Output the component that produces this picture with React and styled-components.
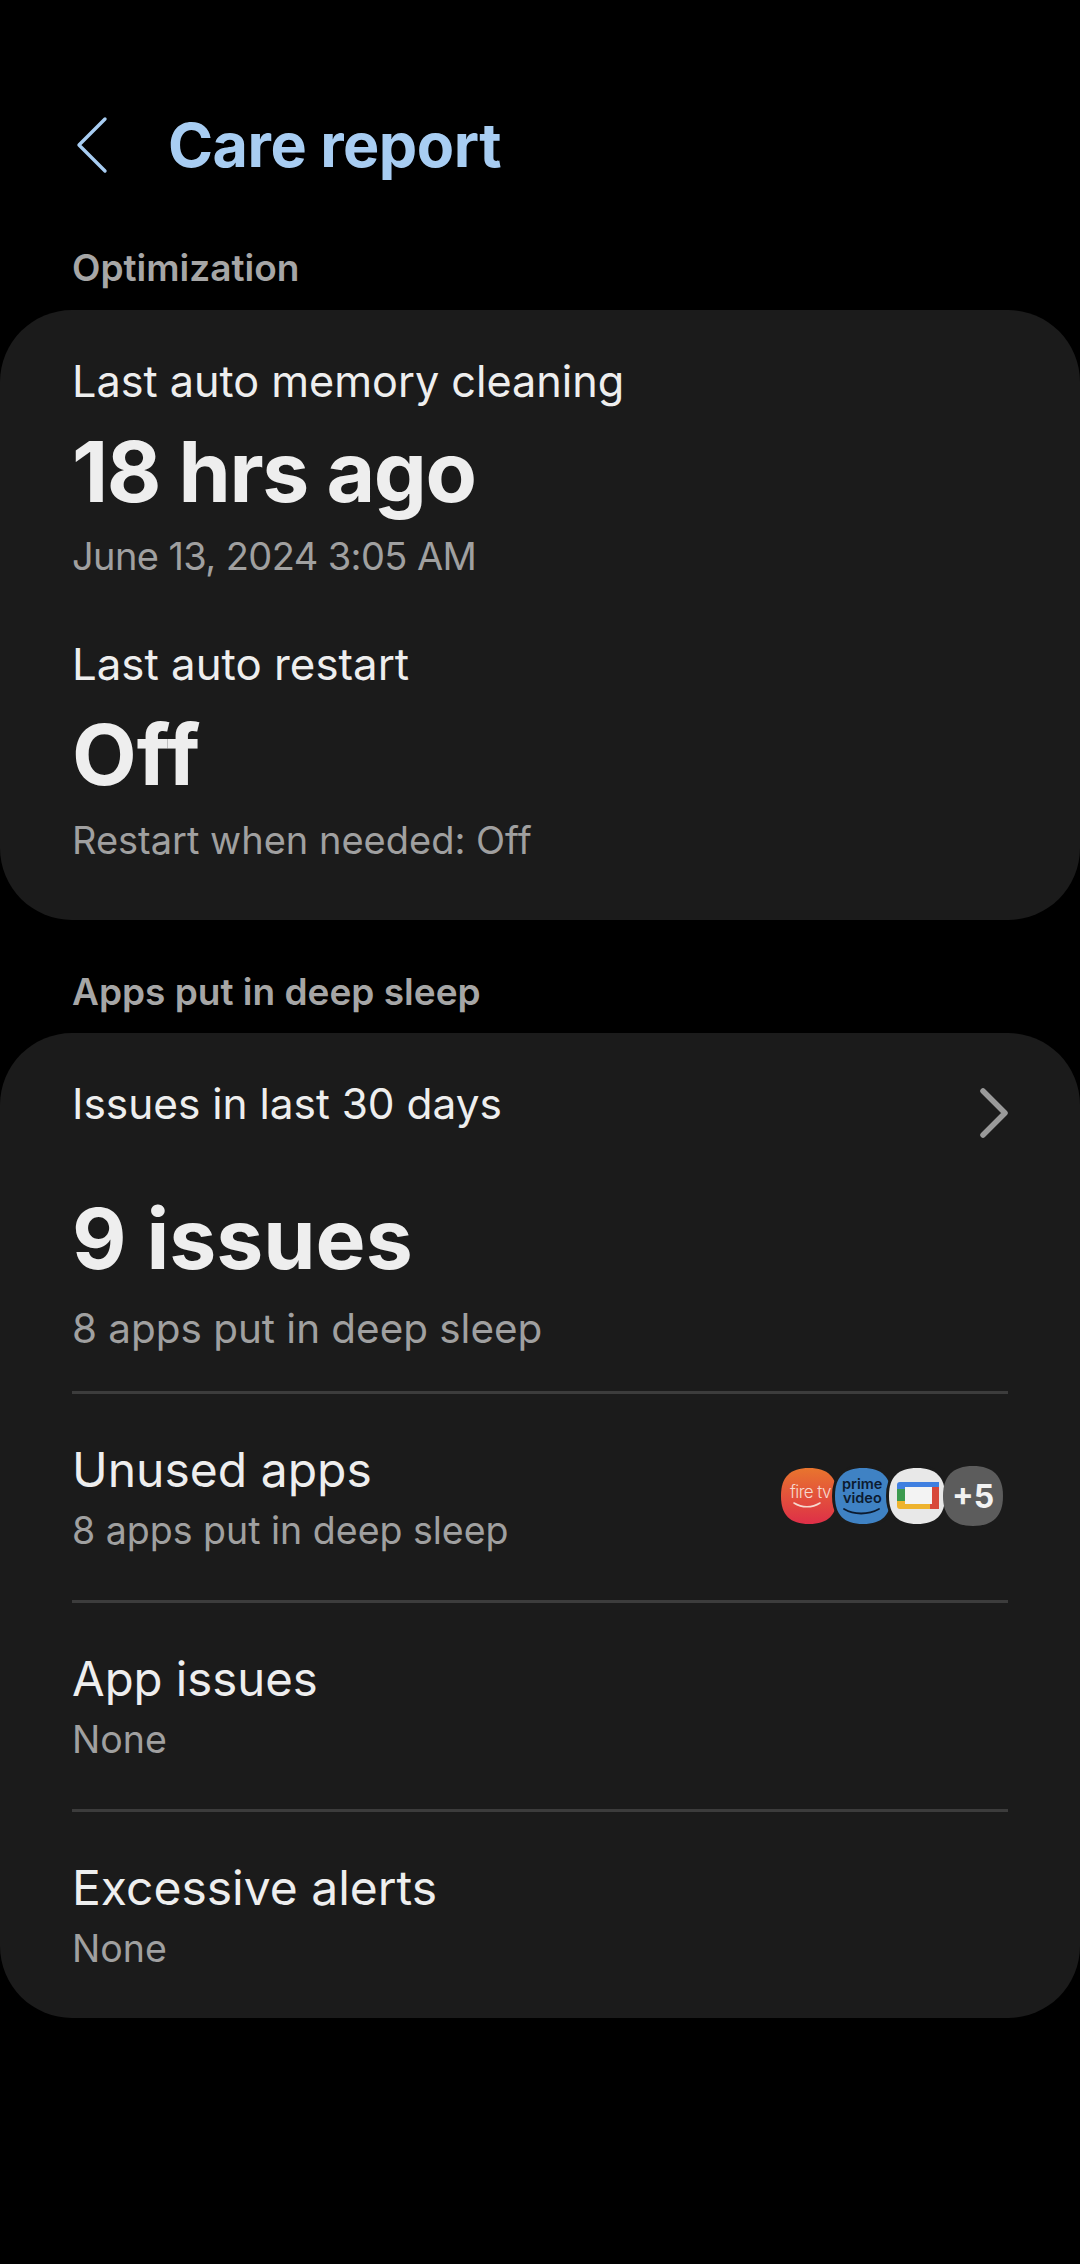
import React from 'react';
import styled, { createGlobalStyle } from 'styled-components';

const GlobalStyle = createGlobalStyle`
  html, body {
    margin: 0;
    padding: 0;
    background: #000;
    font-family: Inter, "Noto Sans", sans-serif;
  }
`;

const Page = styled.div`
  width: 1080px;
  height: 2264px;
  padding-top: 95px;
  box-sizing: border-box;
  background: #000;
  overflow: hidden;
`;

const Header = styled.div`
  display: flex;
  align-items: center;
  height: 100px;
  padding-left: 76px;
  gap: 60px;
`;

const Title = styled.h1`
  margin: 0;
  font-size: 61px;
  font-weight: 700;
  letter-spacing: -0.5px;
  color: #a8cdf2;
`;

const SectionLabel = styled.div`
  margin: ${(p) => p.$top}px 0 ${(p) => p.$bottom}px 72px;
  height: 46px;
  line-height: 46px;
  font-size: 37px;
  font-weight: 600;
  color: #a6a6a6;
`;

const Card = styled.div`
  background: #1b1b1b;
  border-radius: 72px;
  padding: ${(p) => p.$pad};
`;

const StatBlock = styled.div`
  padding-top: ${(p) => p.$top || 0}px;
`;

const StatHead = styled.div`
  display: flex;
  align-items: center;
  justify-content: space-between;
`;

const StatLabel = styled.div`
  height: 50px;
  line-height: 50px;
  font-size: ${(p) => p.$size || 43.2}px;
  color: #eeeeee;
`;

const BigValue = styled.div`
  margin-top: ${(p) => p.$top}px;
  height: 110px;
  line-height: 110px;
  font-size: 84px;
  font-weight: 700;
  letter-spacing: ${(p) => p.$spacing || 0}px;
  color: #eeeeee;
`;

const SubText = styled.div`
  margin-top: ${(p) => p.$top || 0}px;
  height: 46px;
  line-height: 46px;
  font-size: ${(p) => p.$size || 38}px;
  letter-spacing: ${(p) => p.$spacing || 0}px;
  color: #a0a0a0;
`;

const Divider = styled.div`
  height: 3px;
  background: #3c3c3c;
`;

const DividerGap = styled.div`
  height: 39px;
`;

const Row = styled.div`
  display: flex;
  align-items: center;
  justify-content: space-between;
  height: 206px;
  box-sizing: border-box;
`;

const RowTitle = styled.div`
  height: 60px;
  line-height: 60px;
  font-size: ${(p) => p.$size || 48}px;
  color: #eeeeee;
`;

const RowSub = styled(SubText)`
  margin-top: 8px;
`;

const IconStack = styled.div`
  display: flex;
  align-items: center;
  margin-right: 4px;
  margin-top: -2px;
`;

const AppIcon = styled.svg`
  display: block;
  width: 62px;
  height: 62px;
  flex: none;
  margin-left: ${(p) => p.$left || 0}px;
  position: relative;
`;

const CountBadge = styled.div`
  position: relative;
  width: 62px;
  height: 62px;
  margin-left: -6px;
  display: flex;
  align-items: center;
  justify-content: center;
  font-size: 32px;
  font-weight: 700;
  color: #f2f2f2;
`;

const CountShape = styled.svg`
  position: absolute;
  inset: 0;
  width: 100%;
  height: 100%;
`;

const CountText = styled.span`
  position: relative;
`;

const squircle = 'M31 3C50 3 59 12 59 31C59 50 50 59 31 59C12 59 3 50 3 31C3 12 12 3 31 3Z';
const badgeShape = 'M31 1C51 1 61 11 61 31C61 51 51 61 31 61C11 61 1 51 1 31C1 11 11 1 31 1Z';

const FireTvIcon = () => (
  <AppIcon viewBox="0 0 62 62">
    <defs>
      <linearGradient id="fire" x1="0" y1="0" x2="0" y2="1">
        <stop offset="0" stopColor="#e8752e" />
        <stop offset="1" stopColor="#de2f48" />
      </linearGradient>
    </defs>
    <path d={squircle} fill="url(#fire)" />
    <text x="12" y="33" fontFamily="Inter, sans-serif" fontSize="17" fontWeight="300" letterSpacing="-0.6" fill="#f6d9cf">fire tv</text>
    <path d="M16 38C24 43 34 43 42 38" fill="none" stroke="#f6d9cf" strokeWidth="1.6" strokeLinecap="round" />
  </AppIcon>
);

const PrimeVideoIcon = () => (
  <AppIcon viewBox="0 0 62 62" $left={-8}>
    <path d={squircle} fill="#3f82c4" stroke="#1b1b1b" strokeWidth="6" paintOrder="stroke" />
    <text x="10" y="24" fontFamily="Inter, sans-serif" fontSize="14.5" fontWeight="600" fill="#0c1b30">prime</text>
    <text x="11" y="38" fontFamily="Inter, sans-serif" fontSize="14.5" fontWeight="600" fill="#0c1b30">video</text>
    <path d="M12 44C22 50 36 50 47 44" fill="none" stroke="#0c1b30" strokeWidth="1.8" strokeLinecap="round" />
  </AppIcon>
);

const GoogleTvIcon = () => (
  <AppIcon viewBox="0 0 62 62" $left={-8}>
    <path d={squircle} fill="#e8e8e8" stroke="#1b1b1b" strokeWidth="6" paintOrder="stroke" />
    <path d="M14 17H53V22H21V27H11V20C11 18 12 17 14 17Z" fill="#3f7fe0" />
    <path d="M11 24H19V36H11Z" fill="#3c9a4f" />
    <path d="M44 22H53V44H44V36H46V22Z" fill="#d8483a" />
    <path d="M11 36H19V39H44V44H14C12 44 11 43 11 41Z" fill="#eeb32e" />
    <path d="M19 22H46V39H19Z" fill="#f3f3f3" />
  </AppIcon>
);

const ChevronLeft = styled.svg`
  display: block;
  width: 32px;
  height: 58px;
  flex: none;
`;

const ChevronRight = styled.svg`
  display: block;
  width: 30px;
  height: 50px;
  flex: none;
  margin-top: 18px;
`;

const App = () => (
  <>
    <GlobalStyle />
    <Page>
      <Header>
        <ChevronLeft viewBox="0 0 32 58" fill="none" stroke="#a8cdf2" strokeWidth="3.4" strokeLinecap="round" strokeLinejoin="round">
          <path d="M29 3L3 29L29 55" />
        </ChevronLeft>
        <Title>Care report</Title>
      </Header>

      <SectionLabel $top={50} $bottom={19}>Optimization</SectionLabel>
      <Card $pad="46px 72px 57px">
        <StatBlock>
          <StatLabel>Last auto memory cleaning</StatLabel>
          <BigValue $top={11} $spacing={-1.4}>18 hrs ago</BigValue>
          <SubText $top={6} $spacing={-0.6}>June 13, 2024 3:05 AM</SubText>
        </StatBlock>
        <StatBlock $top={61}>
          <StatLabel $size={43.8}>Last auto restart</StatLabel>
          <BigValue $top={10}>Off</BigValue>
          <SubText $top={7}>Restart when needed: Off</SubText>
        </StatBlock>
      </Card>

      <SectionLabel $top={49} $bottom={18}>Apps put in deep sleep</SectionLabel>
      <Card $pad="37px 72px 0">
        <StatHead>
          <StatLabel $size={42.4}>Issues in last 30 days</StatLabel>
          <ChevronRight viewBox="0 0 30 50" fill="none" stroke="#9a9a9a" strokeWidth="5.5" strokeLinecap="round" strokeLinejoin="round">
            <path d="M5 3L27 25L5 47" />
          </ChevronRight>
        </StatHead>
        <BigValue $top={46}>9 issues</BigValue>
        <SubText $top={12} $size={40.4}>8 apps put in deep sleep</SubText>
        <DividerGap />
        <Divider />
        <Row>
          <div>
            <RowTitle>Unused apps</RowTitle>
            <RowSub $size={37.5}>8 apps put in deep sleep</RowSub>
          </div>
          <IconStack>
            <FireTvIcon />
            <PrimeVideoIcon />
            <GoogleTvIcon />
            <CountBadge>
              <CountShape viewBox="0 0 62 62">
                <path d={badgeShape} fill="#5c5c5c" />
              </CountShape>
              <CountText>+5</CountText>
            </CountBadge>
          </IconStack>
        </Row>
        <Divider />
        <Row>
          <div>
            <RowTitle $size={47.3}>App issues</RowTitle>
            <RowSub $size={37.5}>None</RowSub>
          </div>
        </Row>
        <Divider />
        <Row>
          <div>
            <RowTitle>Excessive alerts</RowTitle>
            <RowSub $size={37.5}>None</RowSub>
          </div>
        </Row>
      </Card>
    </Page>
  </>
);

export default App;
